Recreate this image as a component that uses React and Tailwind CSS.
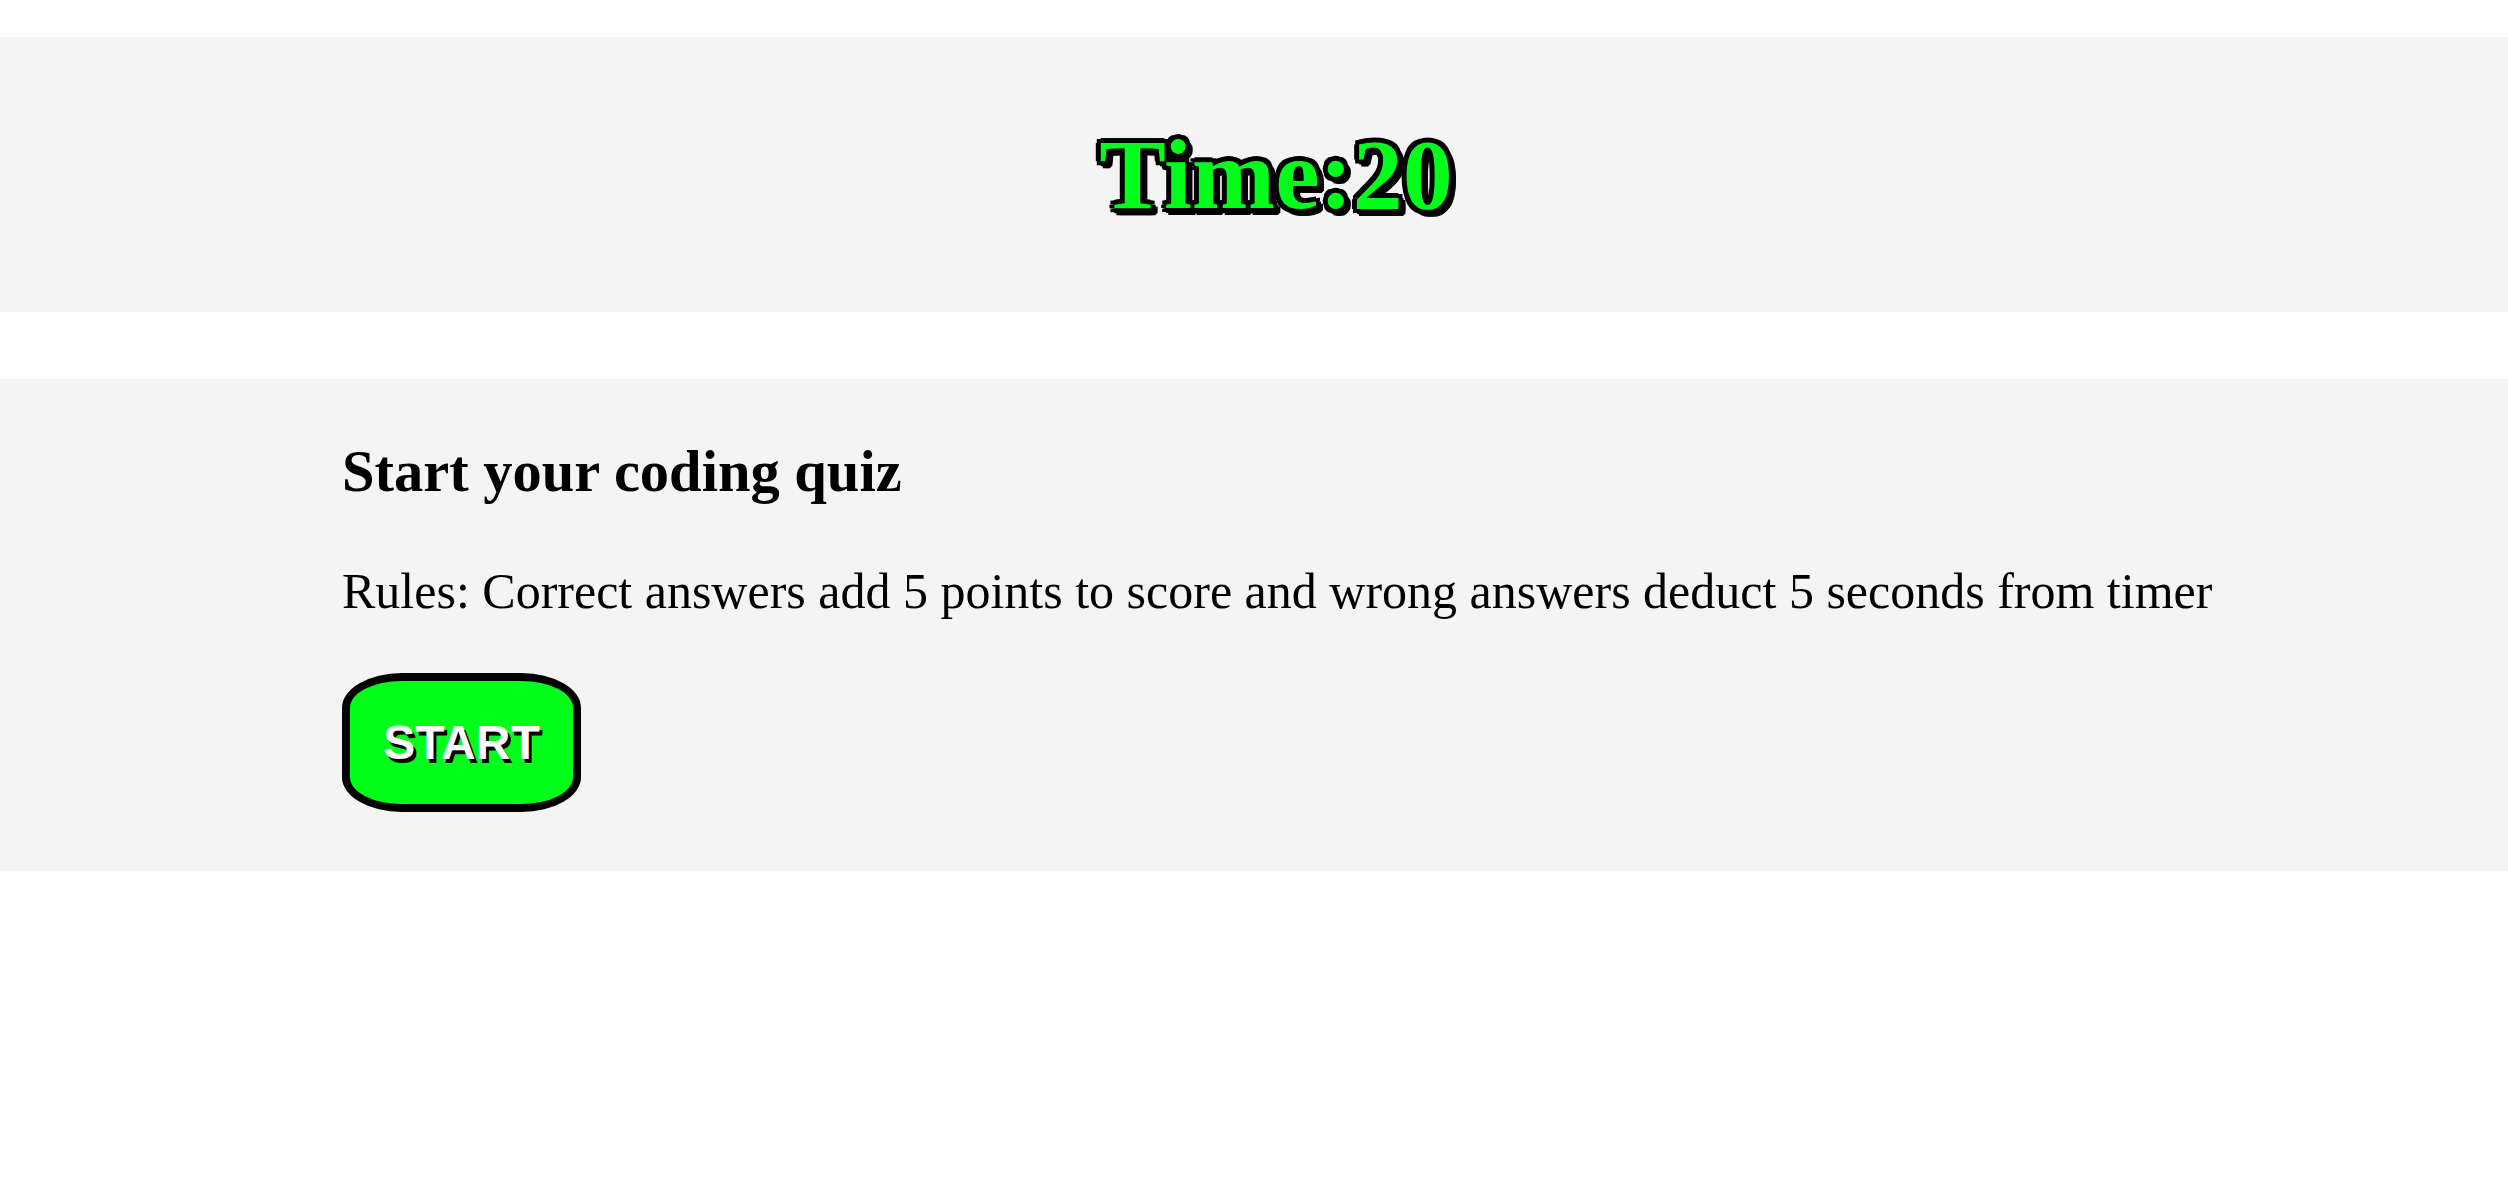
const outline =
  '[text-shadow:-4px_-4px_0_#000,4px_-4px_0_#000,-4px_4px_0_#000,4px_4px_0_#000,0_-5px_0_#000,0_5px_0_#000,-5px_0_0_#000,5px_0_0_#000,6px_6px_0_#000,5px_7px_0_#000,7px_5px_0_#000,2px_7px_0_#000,7px_2px_0_#000]';

const App = () => {
  return (
    <div className="min-h-[1200px] bg-[#fefefe] pt-[37px] font-['Liberation_Serif','Times_New_Roman',serif] text-black">
      {/* Timer */}
      <header className="flex h-[275px] items-center justify-center bg-[#f4f4f4] pl-[44px]">
        <h1 className={`text-[100px] font-bold leading-none text-[#00ff1a] ${outline}`}>Time:20</h1>
      </header>

      {/* Start screen */}
      <section className="mt-[67px] bg-[#f4f4f4] pl-[342px] pt-[60px] pb-[59px]">
        <h2 className="text-[58.5px] font-bold leading-[66px]">Start your coding quiz</h2>
        <p className="mt-[57px] text-[50px] leading-[58px]">
          Rules: Correct answers add 5 points to score and wrong answers deduct 5 seconds from timer
        </p>
        <button className="mt-[53px] flex h-[139px] w-[239px] items-center justify-center rounded-[25%] border-[8px] border-black bg-[#00ff1a] font-['Liberation_Sans',Arial,sans-serif] text-[48px] font-bold text-white [text-shadow:3px_4px_0_#000]">
          START
        </button>
      </section>
    </div>
  );
};

export default App;
